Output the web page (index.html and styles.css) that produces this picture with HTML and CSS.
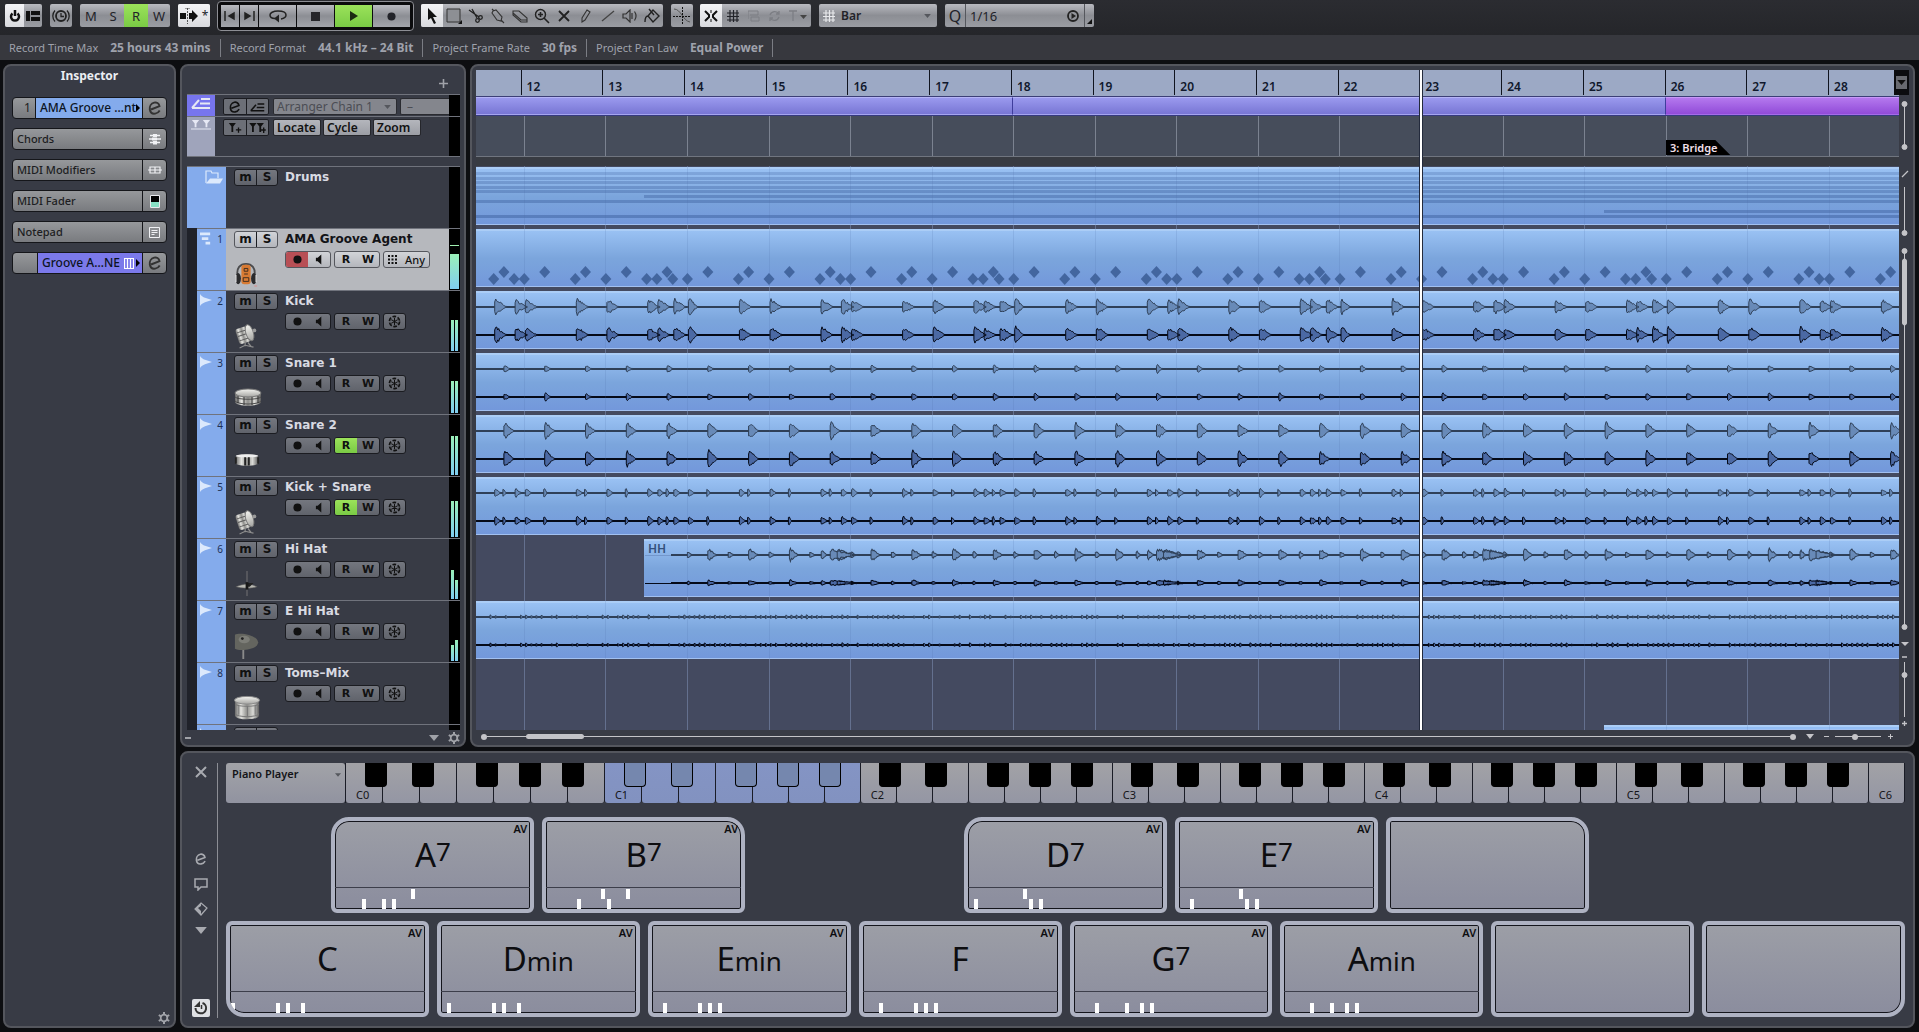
FILE: index.html
```html
<!DOCTYPE html>
<html lang="en">
<head>
<meta charset="utf-8">
<title>Project</title>
<link rel="stylesheet" href="styles.css">
</head>
<body>
<svg class="defs" aria-hidden="true">
  <defs>
    <linearGradient id="chrome" x1="0" x2="1" y1="0" y2="0">
      <stop offset="0" stop-color="#6a6a6a"/><stop offset=".25" stop-color="#e4e4e0"/><stop offset=".5" stop-color="#8f8f8c"/><stop offset=".75" stop-color="#dadad6"/><stop offset="1" stop-color="#5c5c5c"/>
    </linearGradient>
    <linearGradient id="skin" x1="0" x2="0" y1="0" y2="1">
      <stop offset="0" stop-color="#f4f4f0"/><stop offset="1" stop-color="#a5a5a2"/>
    </linearGradient>
  </defs>
  <symbol id="i-edit" viewBox="0 0 16 16"><path d="M4 9.500 12.500 6.200C12 3.200 9.500 2 7.200 2.600 4 3.400 2.300 6.500 2.800 9.500c.5 3 2.800 4.500 5.400 4.100 2-.3 3.500-1.500 4.500-3.200" fill="none" stroke="currentColor" stroke-width="1.900"/></symbol>
  <symbol id="i-chain" viewBox="0 0 20 12"><path d="M1 11 8 3M1 11h18M10 2h9M9 6.500h10" fill="none" stroke="currentColor" stroke-width="2"/></symbol>
  <symbol id="i-markers" viewBox="0 0 22 12"><path d="M1 1h8L6 5v4H4V5zM13 1h8l-3 4v4h-2V5zM0 10.500h22v1H0z" fill="currentColor"/></symbol>
  <symbol id="i-marker-add" viewBox="0 0 18 12"><path d="M2 1h8L7 5v6H5V5zM10 8h6v1.500h-6zM12.200 6h1.500v6h-1.500z" fill="currentColor"/></symbol>
  <symbol id="i-cycle-add" viewBox="0 0 18 12"><path d="M0 1h8L5 5v6H3V5zM8 1h8l-3 4v6h-2V5zM13 8h5v1.500h-5zM15 6h1.500v6H15z" fill="currentColor"/></symbol>
  <symbol id="i-speaker" viewBox="0 0 10 12"><path d="M1 4h2l4-3.500v11L3 8H1z" fill="currentColor"/></symbol>
  <symbol id="i-rec" viewBox="0 0 10 10"><circle cx="5" cy="5" r="4.500" fill="currentColor"/></symbol>
  <symbol id="i-freeze" viewBox="0 0 14 14"><circle cx="7" cy="7" r="5.500" fill="none" stroke="currentColor" stroke-width="1.800" stroke-dasharray="4 1.760"/><path d="M7 3v8M3.500 5l7 4M3.500 9l7-4" stroke="currentColor" stroke-width="1.100"/></symbol>
  <symbol id="i-audio" viewBox="0 0 12 12"><path d="M0 0c1 2 3 3 5 3.800L12 6 5 8.200C3 9 1 10 0 12z" fill="currentColor"/></symbol>
  <symbol id="i-midi" viewBox="0 0 13 14"><path d="M0 0h11v3H0zM2 5h7v3H2zM6 10h5v3H6z" fill="currentColor"/></symbol>
  <symbol id="i-folder" viewBox="0 0 18 14"><path d="M1 13V1h5l1 2h6v5" fill="none" stroke="currentColor" stroke-width="1.200"/><path d="M1 13.500 5 8.500h13l-3 5z" fill="currentColor"/></symbol>
  <symbol id="i-gear" viewBox="0 0 12 12"><circle cx="6" cy="6" r="3.300" fill="none" stroke="currentColor" stroke-width="1.800"/><path d="M6 0v2.500M6 9.500V12M.8 3 3 4.300M9 7.700 11.200 9M.8 9 3 7.700M9 4.300 11.200 3" stroke="currentColor" stroke-width="2"/></symbol>
  <symbol id="i-down" viewBox="0 0 10 6"><path d="M0 0h10L5 6z" fill="currentColor"/></symbol>
  <symbol id="i-grid" viewBox="0 0 14 14"><path d="M4 1v12M7.500 1v12M11 1v12M1 4h12M1 7.500h12M1 11h12" stroke="currentColor" stroke-width="1.200"/></symbol>
  <symbol id="i-headphones" viewBox="0 0 26 28"><path d="M4 17C2 7 7 3 13 3s11 4 9 14" fill="none" stroke="#4c4c4e" stroke-width="2"/><rect x="8" y="4" width="10" height="21" rx="3" fill="#d87a32"/><path d="M11 8h4v3h-4zM11 14h4M10 18h6v4h-6z" fill="none" stroke="#3a2a20"/><ellipse cx="4.500" cy="19" rx="3" ry="6" fill="#2b2b2d"/><ellipse cx="21.500" cy="19" rx="3" ry="6" fill="#2b2b2d"/><path d="M2 15v8M24 15v8" stroke="#d9d9db" stroke-width="1.500"/><path d="M22 27l3 0" stroke="#d88"/></symbol>
  <symbol id="i-kick" viewBox="0 0 28 28"><g transform="rotate(-18 12 12)"><rect x="3" y="4" width="13" height="17" rx="3" fill="url(#chrome)"/><path d="M4 8h11M4 12h11M4 17h11" stroke="#5c5c5c"/><ellipse cx="17" cy="12" rx="4" ry="9" fill="url(#skin)" stroke="#777"/></g><circle cx="22" cy="8" r="2" fill="#9a9a9a"/><path d="M12 20v5M6 27l6-3 9 2M15 21l4 5" stroke="#8d8d8d" fill="none" stroke-width="1.300"/></symbol>
  <symbol id="i-snare" viewBox="0 0 28 20"><path d="M1 5v9c1 5 25 5 26 0V5z" fill="url(#chrome)"/><path d="M1 9c3 3 23 3 26 0M1 13c3 4 23 4 26 0" stroke="#4d4d4d" fill="none"/><ellipse cx="14" cy="5" rx="13" ry="4" fill="url(#skin)" stroke="#777"/><path d="M4 8v7M10 9v8M18 9v8M24 8v7" stroke="#333"/></symbol>
  <symbol id="i-snare2" viewBox="0 0 28 14"><path d="M2 3c4-3 20-3 24 0v8c-4 3-20 3-24 0z" fill="url(#chrome)"/><ellipse cx="14" cy="2.500" rx="12" ry="1.800" fill="#eee"/><path d="M2 4v7M12 4v9M16 4v9M26 4v7" stroke="#222" stroke-width="2"/></symbol>
  <symbol id="i-hat" viewBox="0 0 28 28"><path d="M14 0v27" stroke="#777"/><path d="M2 17c5-2 9-3 12-3s7 1 11 3c-6 2-17 2-23 0z" fill="#b8b8b2" stroke="#555" stroke-width=".6"/><path d="M14 13h7l-4 4h-3z" fill="#222"/><path d="M14 12v8" stroke="#181818" stroke-width="3"/></symbol>
  <symbol id="i-ride" viewBox="0 0 28 28"><path d="M10 12v16" stroke="#8a8a8a" stroke-width="2"/><path d="M1 2c5-3 24 0 25 8 0 8-20 10-25 7z" fill="#64655f"/><ellipse cx="11" cy="7" rx="6" ry="4" fill="#7c7d77"/><circle cx="9" cy="6" r="1.500" fill="#222"/></symbol>
  <symbol id="i-tom" viewBox="0 0 28 25"><path d="M1 5v16c1 5 24 5 25 0V5z" fill="url(#chrome)"/><path d="M1 9c3 3 22 3 25 0M1 19c3 4 22 4 25 0M5 10v10M14 11v11M22 10v10" stroke="#777" fill="none"/><ellipse cx="13.500" cy="5" rx="13" ry="4" fill="url(#skin)" stroke="#888"/></symbol>
</svg>

<div class="app">
  <header class="toolbar">
    <div class="group">
      <button class="on w19" aria-label="Constrain delay"><svg width="12" height="12" viewBox="0 0 12 12"><path d="M3.500 3.500a4 4 0 1 0 5 0" fill="none" stroke="#111" stroke-width="2.500"/><path d="M6 0v6" stroke="#111" stroke-width="2.500"/></svg></button>
      <button class="w18" aria-label="Zones"><svg width="14" height="12" viewBox="0 0 14 12"><path d="M0 1h4v10H0zM5 1h9v4H5zM5 7h9v4H5z" fill="#111"/></svg></button>
    </div>
    <div class="group"><button class="w22" aria-label="Time"><svg width="18" height="16" viewBox="0 0 18 16"><circle cx="9" cy="8" r="5" fill="none" stroke="#222" stroke-width="1.800"/><path d="M9 5v3.500h3M3 2.500a8 8 0 0 0 0 11M15 2.500a8 8 0 0 1 0 11" fill="none" stroke="#222" stroke-width="1.300"/></svg></button></div>
    <div class="group states"><button>M</button><button>S</button><button class="green">R</button><button>W</button></div>
    <div class="group">
      <button class="on w22" aria-label="Auto-scroll"><svg width="18" height="16" viewBox="0 0 18 16"><path d="M0 5h6v6H0zM9 5h3V2l6 6-6 6v-3H9z" fill="#111"/><path d="M7.500 0v16M5 0h5" stroke="#555" stroke-dasharray="2 1"/></svg></button><button class="on w10">*</button>
    </div>
    <div class="transport">
      <button class="w18" aria-label="Previous marker"><svg width="12" height="10" viewBox="0 0 12 10"><path d="M1 0v10M10 2v6L5 5z" fill="#222" stroke="#222" stroke-width="1.500"/></svg></button>
      <button class="w18" aria-label="Next marker"><svg width="12" height="10" viewBox="0 0 12 10"><path d="M11 0v10M2 2v6l5-3z" fill="#222" stroke="#222" stroke-width="1.500"/></svg></button>
      <button class="w37" aria-label="Cycle"><svg width="18" height="14" viewBox="0 0 18 14"><path d="M6 9.500C3 9.500 1 8 1 6s3-4 8-4 8 1.500 8 4-2 3.500-5 4" fill="none" stroke="#222" stroke-width="1.500"/><path d="M10 5.500v8L5 9.500z" fill="#222"/></svg></button>
      <button class="w37" aria-label="Stop"><svg width="9" height="9"><path d="M0 0h9v9H0z" fill="#26262a"/></svg></button>
      <button class="w37 green" aria-label="Play"><svg width="8" height="10"><path d="M0 0v10l8-5z" fill="#1c2a12"/></svg></button>
      <button class="w37" aria-label="Record"><svg width="9" height="9"><use href="#i-rec"/></svg></button>
    </div>
    <div class="group tools">
      <button class="on" aria-label="Object selection"><svg width="12" height="16" viewBox="0 0 12 16"><path d="M2 0v12l3-2 3 6 2-1-3-6h4z" fill="#111"/></svg></button>
      <button aria-label="Range"><svg width="16" height="16" viewBox="0 0 16 16"><path d="M1 1h13v13H1z" fill="#8d8f94" stroke="#333"/><path d="M16 12v4h-4z" fill="#111"/></svg></button>
      <button aria-label="Split"><svg width="16" height="16" viewBox="0 0 16 16"><path d="M1 2l10 7M4 1l5 9" stroke="#222" stroke-width="1.300"/><circle cx="12.500" cy="9.500" r="1.800" fill="none" stroke="#222" stroke-width="1.300"/><circle cx="9.500" cy="12.500" r="1.800" fill="none" stroke="#222" stroke-width="1.300"/></svg></button>
      <button aria-label="Glue"><svg width="16" height="16" viewBox="0 0 16 16"><path d="M3 3l3-1 6 7-1 4-4-1-5-7zM11 12l3 3M2 1l2 2" fill="none" stroke="#333" stroke-width="1.100"/></svg></button>
      <button aria-label="Erase"><svg width="16" height="16" viewBox="0 0 16 16"><path d="M1 3h6l8 7v4h-6L1 7zM1 5l8 7h6" fill="none" stroke="#333" stroke-width="1.100"/></svg></button>
      <button aria-label="Zoom tool"><svg width="16" height="16" viewBox="0 0 16 16"><circle cx="6.500" cy="6.500" r="5" fill="none" stroke="#222" stroke-width="1.400"/><path d="M4 6.500h5M6.500 4v5M10 10l5 5" stroke="#222" stroke-width="1.600"/></svg></button>
      <button aria-label="Mute"><svg width="12" height="12"><path d="M1 1l10 10M11 1 1 11" stroke="#222" stroke-width="1.800"/></svg></button>
      <button aria-label="Draw"><svg width="14" height="16" viewBox="0 0 14 16"><path d="M3 10 8 2l3 2-5 8-3 2z" fill="none" stroke="#333" stroke-width="1.100"/></svg></button>
      <button aria-label="Line"><svg width="14" height="14"><path d="M1 12 13 2" stroke="#444" stroke-width="1.300"/></svg></button>
      <button aria-label="Play tool"><svg width="16" height="14" viewBox="0 0 16 14"><path d="M1 5h3l4-4v12L4 9H1zM10 4v6M12.500 2.500a8 8 0 0 1 0 9" fill="none" stroke="#333" stroke-width="1.200"/></svg></button>
      <button aria-label="Color"><svg width="16" height="16" viewBox="0 0 16 16"><path d="M4 8 9 2l6 6-6 6zM5 1l5 6M4 8c-3 0-3 3-3 6" fill="none" stroke="#222" stroke-width="1.400"/></svg></button>
    </div>
    <div class="group"><button class="w22" aria-label="Automation follows"><svg width="18" height="20" viewBox="0 0 18 20"><path d="M1 3c7 0 9 12 16 13" fill="none" stroke="#555"/><path d="M0 10.500h18M9.500 1v18" stroke="#111" stroke-dasharray="2 1"/></svg></button></div>
    <div class="group snap">
      <button class="on w22" aria-label="Snap"><svg width="14" height="12" viewBox="0 0 14 12"><path d="M1 1l4 4v2l-4 4M13 1 9 5v2l4 4" fill="none" stroke="#111" stroke-width="2"/><path d="M7 0v3M7 9v3" stroke="#111"/></svg></button>
      <button class="w22" aria-label="Grid"><svg width="14" height="14"><use href="#i-grid"/></svg></button>
      <button class="w20 faint" aria-label="Align"><svg width="12" height="12" viewBox="0 0 12 12"><path d="M0 1h10v4H2M3 7h8v4H3zM0 1v8" fill="none" stroke="currentColor"/></svg></button>
      <button class="w20 faint" aria-label="Relative"><svg width="13" height="12" viewBox="0 0 13 12"><path d="M2 5a5 5 0 0 1 9-1M11 7a5 5 0 0 1-9 1M11 1v3H8M2 11V8h3" fill="none" stroke="currentColor" stroke-width="1.300"/></svg></button>
      <button class="w27 faint" aria-label="Snap type"><svg width="18" height="12" viewBox="0 0 18 12"><path d="M0 1h8M4 1v10" stroke="currentColor" stroke-width="1.300"/><path d="M11 5h7l-3.500 4z" fill="#444"/></svg></button>
    </div>
    <div class="group field gridtype"><svg class="lead" width="14" height="14"><use href="#i-grid"/></svg><select aria-label="Grid type"><option>Bar</option></select><svg class="arrow" width="7" height="4"><use href="#i-down"/></svg></div>
    <div class="group field quant"><button class="q w21">Q</button><select aria-label="Quantize preset"><option>1/16</option></select><button class="w22 plain" aria-label="Apply quantize"><svg width="12" height="12" viewBox="0 0 12 12"><circle cx="6" cy="6" r="5" fill="none" stroke="#222" stroke-width="1.800"/><path d="M4.500 3v6L9 6z" fill="#222"/></svg></button><button class="w10 cell" aria-label="Quantize panel"><svg width="5" height="5"><path d="M5 0v5H0z" fill="#111"/></svg></button></div>
  </header>

  <dl class="infoline">
    <div><dt>Record Time Max</dt><dd>25 hours 43 mins</dd></div>
    <div><dt>Record Format</dt><dd>44.1 kHz – 24 Bit</dd></div>
    <div><dt>Project Frame Rate</dt><dd>30 fps</dd></div>
    <div><dt>Project Pan Law</dt><dd>Equal Power</dd></div>
  </dl>

  <main class="workspace">
    <aside class="panel inspector">
      <h2>Inspector</h2>
      <div class="slot"><span class="num">1</span><button class="name blue">AMA Groove …nt<svg width="4" height="8"><path d="M0 0v8l4-4z"/></svg></button><button class="end" aria-label="Edit channel"><svg width="16" height="16"><use href="#i-edit"/></svg></button></div>
      <div class="slot"><button class="title">Chords</button><button class="end light" aria-label="Chords state"><svg width="12" height="12" viewBox="0 0 12 12"><path d="M1 2.500h10M0 6h12M1 9.500h10" stroke="currentColor" stroke-width="1.500"/><path d="M4 1h4v3H4zM3 4.500h5v3H3zM4 8h4v3.500H4z" fill="currentColor"/></svg></button></div>
      <div class="slot"><button class="title">MIDI Modifiers</button><button class="end light" aria-label="Modifiers state"><svg width="14" height="8" viewBox="0 0 14 8"><path d="M2 1h10v6H2zM0 4h14M7 1v6" fill="none" stroke="currentColor" stroke-width="1.200"/></svg></button></div>
      <div class="slot"><button class="title">MIDI Fader</button><button class="end" aria-label="Fader state"><svg width="10" height="13"><path d="M.5.5h9v12h-9z" fill="#000" stroke="#e8eaee"/><path d="M1 7h8v5H1z" fill="#86e0c4"/></svg></button></div>
      <div class="slot"><button class="title">Notepad</button><button class="end light" aria-label="Notepad state"><svg width="11" height="11" viewBox="0 0 11 11"><path d="M.5.5h10v10H.5zM2.500 3.500h6M2.500 5.500h6M2.500 7.500h3" fill="none" stroke="currentColor"/></svg></button></div>
      <div class="slot"><span class="num"></span><button class="name violet">Groove A…NE<svg class="keys" width="10" height="11" viewBox="0 0 10 11"><path d="M.5.5h9v10h-9zM3.500 0v10M6.500 0v10" fill="none" stroke="#fff" stroke-width="1.200"/></svg><svg width="4" height="8"><path d="M0 0v8l4-4z"/></svg></button><button class="end" aria-label="Edit instrument"><svg width="16" height="16"><use href="#i-edit"/></svg></button></div>
      <button class="gear" aria-label="Inspector setup"><svg width="12" height="12"><use href="#i-gear"/></svg></button>
    </aside>

    <div class="zones">
      <div class="upper">
        <section class="panel tracklist" aria-label="Tracks">
          <div class="listhead"><button aria-label="Add track"><svg width="9" height="9"><path d="M4.500 0v9M0 4.500h9" stroke="currentColor" stroke-width="1.600"/></svg></button></div>
          <div class="row arranger">
            <div class="tag"><svg width="20" height="12"><use href="#i-chain"/></svg></div>
            <div class="body">
              <span class="pair"><button aria-label="Edit arranger"><svg width="14" height="14"><use href="#i-edit"/></svg></button><button aria-label="Arranger mode"><svg width="15" height="10"><use href="#i-chain"/></svg></button></span>
              <span class="chain"><select aria-label="Arranger chain" disabled><option>Arranger Chain 1</option></select><svg class="arrow" width="7" height="4"><use href="#i-down"/></svg></span>
              <input class="repeat" aria-label="Repeats" value="–" disabled>
            </div>
            <div class="meter"></div>
          </div>
          <div class="row markers">
            <div class="tag"><svg width="20" height="11"><use href="#i-markers"/></svg></div>
            <div class="body">
              <span class="pair"><button aria-label="Add marker"><svg width="16" height="11"><use href="#i-marker-add"/></svg></button><button aria-label="Add cycle marker"><svg width="17" height="11"><use href="#i-cycle-add"/></svg></button></span>
              <button class="pale">Locate</button><button class="pale">Cycle</button><button class="pale">Zoom</button>
            </div>
            <div class="meter"></div>
          </div>
          <div class="tracks">
            <div class="row track folder">
              <div class="tag"><svg width="18" height="14"><use href="#i-folder"/></svg></div>
              <div class="body"><div class="ms"><button>m</button><button>S</button></div><h3>Drums</h3></div>
              <div class="meter"></div>
            </div>
            <div class="row track selected">
              <div class="tag"><svg width="12" height="14"><use href="#i-midi"/></svg><span>1</span></div>
              <div class="body"><div class="ms"><button>m</button><button>S</button></div><h3>AMA Groove Agent</h3>
                <svg class="pic" width="24" height="26"><use href="#i-headphones"/></svg>
                <div class="ctl"><span class="box"><button class="armed" aria-label="Record"><svg width="9" height="9"><use href="#i-rec"/></svg></button><button aria-label="Monitor"><svg width="9" height="11"><use href="#i-speaker"/></svg></button></span><span class="box"><button>R</button><button>W</button></span><button class="box any"><svg width="9" height="9" viewBox="0 0 9 9"><path d="M0 1h9M0 4.500h9M0 8h9" stroke="#111" stroke-width="1.800" stroke-dasharray="2 1.500"/></svg>Any</button></div></div>
              <div class="meter wide"><i class="peak"></i><i style="height:35px"></i></div>
            </div>
            <div class="row track">
              <div class="tag"><svg width="12" height="12"><use href="#i-audio"/></svg><span>2</span></div>
              <div class="body"><div class="ms"><button>m</button><button>S</button></div><h3>Kick</h3>
                <svg class="pic" width="26" height="28"><use href="#i-kick"/></svg>
                <div class="ctl"><span class="box"><button aria-label="Record"><svg width="9" height="9"><use href="#i-rec"/></svg></button><button aria-label="Monitor"><svg width="9" height="11"><use href="#i-speaker"/></svg></button></span><span class="box"><button>R</button><button>W</button></span><button class="box ice" aria-label="Freeze"><svg width="13" height="13"><use href="#i-freeze"/></svg></button></div></div>
              <div class="meter"><i style="height:31px"></i><i style="height:31px"></i></div>
            </div>
            <div class="row track">
              <div class="tag"><svg width="12" height="12"><use href="#i-audio"/></svg><span>3</span></div>
              <div class="body"><div class="ms"><button>m</button><button>S</button></div><h3>Snare 1</h3>
                <svg class="pic" width="28" height="20"><use href="#i-snare"/></svg>
                <div class="ctl"><span class="box"><button aria-label="Record"><svg width="9" height="9"><use href="#i-rec"/></svg></button><button aria-label="Monitor"><svg width="9" height="11"><use href="#i-speaker"/></svg></button></span><span class="box"><button>R</button><button>W</button></span><button class="box ice" aria-label="Freeze"><svg width="13" height="13"><use href="#i-freeze"/></svg></button></div></div>
              <div class="meter"><i style="height:32px"></i><i style="height:32px"></i></div>
            </div>
            <div class="row track">
              <div class="tag"><svg width="12" height="12"><use href="#i-audio"/></svg><span>4</span></div>
              <div class="body"><div class="ms"><button>m</button><button>S</button></div><h3>Snare 2</h3>
                <svg class="pic" width="26" height="14"><use href="#i-snare2"/></svg>
                <div class="ctl"><span class="box"><button aria-label="Record"><svg width="9" height="9"><use href="#i-rec"/></svg></button><button aria-label="Monitor"><svg width="9" height="11"><use href="#i-speaker"/></svg></button></span><span class="box"><button class="green">R</button><button>W</button></span><button class="box ice" aria-label="Freeze"><svg width="13" height="13"><use href="#i-freeze"/></svg></button></div></div>
              <div class="meter"><i style="height:39px"></i><i style="height:39px"></i></div>
            </div>
            <div class="row track">
              <div class="tag"><svg width="12" height="12"><use href="#i-audio"/></svg><span>5</span></div>
              <div class="body"><div class="ms"><button>m</button><button>S</button></div><h3>Kick + Snare</h3>
                <svg class="pic" width="26" height="28"><use href="#i-kick"/></svg>
                <div class="ctl"><span class="box"><button aria-label="Record"><svg width="9" height="9"><use href="#i-rec"/></svg></button><button aria-label="Monitor"><svg width="9" height="11"><use href="#i-speaker"/></svg></button></span><span class="box"><button class="green">R</button><button>W</button></span><button class="box ice" aria-label="Freeze"><svg width="13" height="13"><use href="#i-freeze"/></svg></button></div></div>
              <div class="meter"><i style="height:36px"></i><i style="height:36px"></i></div>
            </div>
            <div class="row track">
              <div class="tag"><svg width="12" height="12"><use href="#i-audio"/></svg><span>6</span></div>
              <div class="body"><div class="ms"><button>m</button><button>S</button></div><h3>Hi Hat</h3>
                <svg class="pic" width="26" height="28"><use href="#i-hat"/></svg>
                <div class="ctl"><span class="box"><button aria-label="Record"><svg width="9" height="9"><use href="#i-rec"/></svg></button><button aria-label="Monitor"><svg width="9" height="11"><use href="#i-speaker"/></svg></button></span><span class="box"><button>R</button><button>W</button></span><button class="box ice" aria-label="Freeze"><svg width="13" height="13"><use href="#i-freeze"/></svg></button></div></div>
              <div class="meter"><i style="height:29px"></i><i style="height:19px"></i></div>
            </div>
            <div class="row track">
              <div class="tag"><svg width="12" height="12"><use href="#i-audio"/></svg><span>7</span></div>
              <div class="body"><div class="ms"><button>m</button><button>S</button></div><h3>E Hi Hat</h3>
                <svg class="pic" width="26" height="28"><use href="#i-ride"/></svg>
                <div class="ctl"><span class="box"><button aria-label="Record"><svg width="9" height="9"><use href="#i-rec"/></svg></button><button aria-label="Monitor"><svg width="9" height="11"><use href="#i-speaker"/></svg></button></span><span class="box"><button>R</button><button>W</button></span><button class="box ice" aria-label="Freeze"><svg width="13" height="13"><use href="#i-freeze"/></svg></button></div></div>
              <div class="meter"><i style="height:16px"></i><i style="height:21px"></i></div>
            </div>
            <div class="row track">
              <div class="tag"><svg width="12" height="12"><use href="#i-audio"/></svg><span>8</span></div>
              <div class="body"><div class="ms"><button>m</button><button>S</button></div><h3>Toms–Mix</h3>
                <svg class="pic" width="27" height="25"><use href="#i-tom"/></svg>
                <div class="ctl"><span class="box"><button aria-label="Record"><svg width="9" height="9"><use href="#i-rec"/></svg></button><button aria-label="Monitor"><svg width="9" height="11"><use href="#i-speaker"/></svg></button></span><span class="box"><button>R</button><button>W</button></span><button class="box ice" aria-label="Freeze"><svg width="13" height="13"><use href="#i-freeze"/></svg></button></div></div>
              <div class="meter"></div>
            </div>
            <div class="row track cut">
              <div class="tag"><svg width="12" height="12"><use href="#i-audio"/></svg></div>
              <div class="body"><div class="ms"><button aria-label="Mute"></button><button aria-label="Solo"></button></div></div>
              <div class="meter"></div>
            </div>
          </div>
          <div class="listfoot"><span class="dash"></span><svg width="10" height="6"><use href="#i-down"/></svg><button aria-label="Track controls"><svg width="12" height="12"><use href="#i-gear"/></svg></button></div>
        </section>

        <section class="panel arrange" aria-label="Project window">
          <div class="canvas">
            <div class="ruler">
              <span class="pre"></span><span class="bar">12</span><span class="bar">13</span><span class="bar">14</span><span class="bar">15</span><span class="bar">16</span><span class="bar">17</span><span class="bar">18</span><span class="bar">19</span><span class="bar">20</span><span class="bar">21</span><span class="bar">22</span><span class="bar">23</span><span class="bar">24</span><span class="bar">25</span><span class="bar">26</span><span class="bar">27</span><span class="bar last">28</span>
            </div>
            <div class="parts"><span class="part p1"></span><span class="part p2"></span><span class="part p3"></span></div>
            <div class="markerlane"><svg class="lines" data-grid="#7b8290"></svg><span class="before"></span><span class="flag">3: Bridge</span></div>
            <div class="split"></div>
            <div class="lanes">
              <svg class="lines" data-grid="#69718a"></svg>
              <div class="lane"><div class="event"><svg data-wave="folder"></svg></div></div>
              <div class="lane"><div class="event"><svg data-wave="notes"></svg></div></div>
              <div class="lane"><div class="event"><svg data-wave="kick"></svg></div></div>
              <div class="lane"><div class="event"><svg data-wave="snare1"></svg></div></div>
              <div class="lane"><div class="event"><svg data-wave="snare2"></svg></div></div>
              <div class="lane"><div class="event"><svg data-wave="mix"></svg></div></div>
              <div class="lane"><div class="event" style="margin-left:11.8%"><span class="clip">HH</span><svg data-wave="hat" data-from="168"></svg></div></div>
              <div class="lane"><div class="event"><svg data-wave="ehat"></svg></div></div>
              <div class="lane"></div>
              <div class="lane cut"><div class="event" style="margin-left:79.3%"></div></div>
              <svg class="lines soft" data-grid="#4d6da6"></svg>
            </div>
            <div class="playhead" style="left:66.3%"></div>
          </div>
          <div class="side">
            <button class="corner" aria-label="Ruler format"><svg width="8" height="5"><use href="#i-down"/></svg></button>
            <svg width="14" height="635" viewBox="0 0 14 635" fill="#c4c4c8" stroke="#c4c4c8">
              <path d="M5.500 9v43M5.500 92v46M5.500 156v376M5.500 567v55" fill="none"/>
              <path d="M3 82l6-6M3 562h5M3 628.500h5M5.500 626v5" fill="none" stroke-width="1.300"/>
              <circle cx="5.500" cy="9" r="2.500"/><circle cx="5.500" cy="52" r="2.500"/><circle cx="5.500" cy="138" r="2.500"/><circle cx="5.500" cy="156" r="2.500"/><circle cx="5.500" cy="532" r="2.500"/><circle cx="5.500" cy="580" r="2.500"/>
              <rect x="3.500" y="164" width="4" height="66" rx="2"/><path d="M2 547h8l-4 4z" stroke="none"/>
            </svg>
          </div>
          <div class="hscroll">
            <i class="dot"></i><span class="track-line"><i class="thumb" style="margin-left:3%"></i></span><i class="dot"></i>
            <svg width="8" height="5"><use href="#i-down"/></svg><span class="sign minus"></span><input type="range" aria-label="Horizontal zoom" value="42"><span class="sign plus"></span>
          </div>
        </section>
      </div>

      <section class="panel chords" aria-label="Chord pads">
        <nav class="rail">
          <button aria-label="Close"><svg width="12" height="12"><path d="M1 1l10 10M11 1 1 11" stroke="currentColor" stroke-width="2"/></svg></button>
          <button class="push" aria-label="Player setup"><svg width="16" height="14"><use href="#i-edit"/></svg></button>
          <button aria-label="Chord assistant"><svg width="14" height="14" viewBox="0 0 14 14"><path d="M1 2h12v8H7l-3 3v-3H1z" fill="none" stroke="currentColor" stroke-width="1.500"/></svg></button>
          <button aria-label="Pad layout"><svg width="14" height="14" viewBox="0 0 14 14"><path d="M7 1l6 5-6 7-6-6z" fill="none" stroke="currentColor" stroke-width="1.200"/><path d="M7 1 1 7l6 6z" fill="currentColor"/><path d="M4 6l3-2v5z" fill="#383b45"/></svg></button>
          <button aria-label="Functions"><svg width="12" height="7"><use href="#i-down" width="12" height="7"/></svg></button>
          <button class="lit" aria-label="Use velocity"><svg width="14" height="14" viewBox="0 0 14 14"><path d="M8.500 2a5.300 5.300 0 1 1-7 5" fill="none" stroke="#333" stroke-width="2"/><path d="M0 6 6 0v6z" fill="#333"/><path d="M7.500 4v4" stroke="#333" stroke-width="1.500"/></svg></button>
        </nav>
        <div class="deck">
          <div class="piano">
            <div class="player"><select aria-label="Player"><option>Piano Player</option></select><svg class="arrow" width="6" height="4"><use href="#i-down"/></svg></div>
            <div class="keyboard" id="keyboard"></div>
          </div>
          <div class="pads">
            <button class="pad r1 c2 tl"><b>AV</b><span class="chord">A<sup>7</sup></span><svg class="voicing" data-low="26,46,56" data-high="75"></svg></button>
            <button class="pad r1 c4 tr"><b>AV</b><span class="chord">B<sup>7</sup></span><svg class="voicing" data-low="30,60" data-high="54,79"></svg></button>
            <button class="pad r1 c8 tl"><b>AV</b><span class="chord">D<sup>7</sup></span><svg class="voicing" data-low="5,60,70" data-high="54"></svg></button>
            <button class="pad r1 c10"><b>AV</b><span class="chord">E<sup>7</sup></span><svg class="voicing" data-low="10,65,75" data-high="59"></svg></button>
            <button class="pad r1 c12 tr" aria-label="Empty pad"></button>
            <button class="pad r2 bl"><b>AV</b><span class="chord">C</span><svg class="voicing" data-low="0,45,55,70"></svg></button>
            <button class="pad r2"><b>AV</b><span class="chord">D<small>min</small></span><svg class="voicing" data-low="5,50,60,75"></svg></button>
            <button class="pad r2"><b>AV</b><span class="chord">E<small>min</small></span><svg class="voicing" data-low="10,45,55,65"></svg></button>
            <button class="pad r2"><b>AV</b><span class="chord">F</span><svg class="voicing" data-low="15,50,60,70"></svg></button>
            <button class="pad r2"><b>AV</b><span class="chord">G<sup>7</sup></span><svg class="voicing" data-low="20,50,65,75"></svg></button>
            <button class="pad r2"><b>AV</b><span class="chord">A<small>min</small></span><svg class="voicing" data-low="25,45,60,70"></svg></button>
            <button class="pad r2" aria-label="Empty pad"></button>
            <button class="pad r2 br" aria-label="Empty pad"></button>
          </div>
        </div>
      </section>
    </div>
  </main>
</div>
<script src="project.js"></script>
</body>
</html>
```
FILE: styles.css
```css
* { box-sizing: border-box; }
body { margin: 0; background: #0d0e11; color: #d4d6de; font: 12px/16px "Noto Sans", "Open Sans", sans-serif; }
button, select, input { font: inherit; color: inherit; margin: 0; padding: 0; border: 0; background: none; border-radius: 0; appearance: none; outline: 0; }
button { display: flex; align-items: center; justify-content: center; flex: none; }
select:disabled, input:disabled { opacity: 1; }
h2, h3, dl, dd { margin: 0; font-size: inherit; }
svg { display: block; flex: none; }
.defs { position: absolute; width: 0; height: 0; }
.app { display: flex; flex-direction: column; min-height: 100vh; }

/* toolbar */
.toolbar { display: flex; align-items: flex-start; height: 35px; padding: 4px 5px 0; gap: 8px; background: linear-gradient(#2b2c31, #25262a); color: #222329; }
.group { display: flex; height: 23px; border-radius: 2px; overflow: hidden; background: linear-gradient(#b9bac0, #8c8e94 50%, #9b9da3); position: relative; }
.group button { height: 23px; }
.toolbar .on { background: linear-gradient(#f4f4f6, #d9dade); }
.green, .toolbar .green { background: linear-gradient(#9be25a, #7acb45); }
.w10 { width: 10px; } .w18 { width: 18px; } .w19 { width: 19px; } .w20 { width: 20px; } .w21 { width: 21px; }
.w22 { width: 22px; } .w27 { width: 27px; } .w37 { width: 37px; }
.states { font-size: 13px; }
.states button { width: 22px; }
.states button:nth-child(3) { width: 24px; }
.toolbar .transport { display: flex; gap: 1px; height: 30px; margin: -3px -1px 0; padding: 3px; background: #0b0b0d; border: 1px solid #8d8e94; border-radius: 4px; }
.transport button { height: 22px; background: linear-gradient(#b9bac0, #8c8e94 50%, #a3a5ab); }
.tools button { width: 22px; }
.snap { margin-left: -1px; }
.faint { color: #7c7e84; }
.field { align-items: center; }
.field select { flex: 1; height: 23px; font-size: 12px; }
.lead { margin: 0 5px 0 3px; color: #e8e9ec; }
.arrow { position: absolute; right: 6px; top: 10px; color: #55575d; pointer-events: none; }
.gridtype { width: 118px; font-weight: 600; }
.quant { width: 149px; }
.quant .q { border-right: 1px solid #55575d; font-size: 16px; }
.quant select { padding-left: 4px; font-size: 13px; }
.quant .cell { border-left: 1px solid #55575d; align-items: flex-end; padding-bottom: 3px; }

/* info line */
.infoline { display: flex; align-items: center; height: 25px; background: #37383e; color: #9fa2ac; font-size: 11px; }
.infoline div { display: flex; gap: 12px; padding: 0 9px; border-right: 1px solid #7b7d84; line-height: 18px; }
.infoline dt { font-weight: 400; }
.infoline dd { font-weight: 700; font-size: 12px; }

/* panels */
.workspace { display: flex; flex: 1; gap: 4px; padding: 4px 4px 4px 3px; }
.panel { background: #383b45; border: 2px solid #54565d; border-radius: 8px; }
.zones { display: flex; flex-direction: column; flex: 1; min-width: 0; gap: 4px; }
.upper { display: flex; gap: 4px; }

/* inspector */
.inspector { display: flex; flex-direction: column; width: 173px; padding: 2px 7px; }
.inspector h2 { text-align: center; color: #eceef2; margin-bottom: 13px; }
.slot { display: flex; height: 22px; margin-bottom: 9px; color: #1d1e22; background: linear-gradient(#96989b, #797b7f); border: 1px solid #15161a; border-radius: 4px; overflow: hidden; }
.num { width: 24px; padding-right: 4px; text-align: right; line-height: 20px; }
.slot .name { flex: 1; justify-content: space-between; padding: 0 2px 0 4px; border-left: 1px solid #15161a; white-space: nowrap; font-weight: 500; color: #0c1422; }
.slot .title { flex: 1; justify-content: flex-start; padding-left: 4px; font-size: 11px; font-weight: 500; }
.blue { background: #84abec; }
.violet { background: #7b79ea; }
.keys { margin-left: 2px; }
.end { width: 24px; border-left: 1px solid #15161a; color: #333; }
.light { color: #f0f1f4; }
.gear { margin: auto -3px 0 auto; color: #a0a2a8; }

/* track list */
.tracklist { width: 286px; padding: 0 4px 0 5px; }
.listhead { display: flex; align-items: center; justify-content: flex-end; height: 28px; padding: 6px 12px 0 0; color: #9fa1a8; }
.row { display: flex; border-top: 1px solid #70737c; }
.tag { display: flex; justify-content: center; width: 28px; padding-top: 2px; color: #e6e8f4; }
.row .body { flex: 1; display: flex; align-items: flex-start; min-width: 0; color: #111; }
.meter { display: flex; align-items: flex-end; gap: 1px; width: 11px; padding: 0 2px 1px; background: #000; }
.meter i { width: 3px; background: linear-gradient(#9af0b8, #7fcdf0); }
.meter.wide { position: relative; padding: 0 1px 1px; }
.meter.wide i { width: 9px; }
.meter .peak { position: absolute; bottom: 44px; height: 1px; background: #a0f0b0; }
.arranger { height: 22px; }
.arranger .tag { background: #7775ee; }
.arranger .body, .markers .body { padding: 3px 0 0 8px; }
.pair { display: flex; margin-right: 4px; border: 1px solid #1b1c21; border-radius: 2px; background: #6c6f77; }
.pair button { width: 22px; height: 15px; }
.pair button + button { border-left: 1px solid #1b1c21; }
.chain { position: relative; margin-right: 3px; }
.chain select { width: 124px; height: 17px; padding-left: 3px; font-size: 12px; border: 1px solid #2a2b30; border-radius: 2px; background: #84868d; color: #4b4d54; }
.chain .arrow { top: 7px; }
.repeat { flex: 1; min-width: 0; height: 17px; padding-left: 6px; background: #84868d; color: #4b4d54; border: 1px solid #2a2b30; border-right: 0; border-radius: 2px 0 0 2px; }
.markers { height: 41px; border-bottom: 1px solid #70737c; }
.markers .body { padding-top: 2px; }
.markers .tag { background: #9fa4bb; }
.pale { width: 48px; height: 17px; margin-right: 2px; padding-left: 3px; justify-content: flex-start; font-weight: 600; background: linear-gradient(#b4b6bc, #9b9da4); border: 1px solid #25262b; border-radius: 2px; }
.tracks { margin-top: 9px; background: #20222a; }
.track { height: 62px; margin-left: 10px; }
.track .tag { width: 29px; padding: 3px 3px 0; justify-content: space-between; background: #84abec; color: #dce9fc; }
.tag span { font-size: 10px; line-height: 14px; color: #1d3156; }
.track .body { display: grid; grid-template-columns: 44px 1fr; grid-template-rows: 17px 1fr; column-gap: 7px; row-gap: 3px; padding: 2px 0 0 8px; background: #383b45; }
.track h3 { font: 700 12px/17px "DejaVu Sans", sans-serif; color: #d8dae2; white-space: nowrap; }
.folder { margin-left: 0; }
.folder .tag { width: 39px; justify-content: flex-end; }
.track.selected .body { background: #b6b8bd; }
.track.selected h3 { color: #121317; font-weight: 700; }
.ms, .box { display: flex; border: 1px solid #1b1c21; border-radius: 3px; background: linear-gradient(#74777f, #60636b); font: 700 12px/15px "DejaVu Sans", sans-serif; overflow: hidden; }
.ms { height: 17px; }
.ms button { width: 21px; height: 15px; }
.ms button + button { border-left: 1px solid #1b1c21; }
.selected .ms, .selected .box { background: linear-gradient(#d2d4d8, #b4b6bc); border-color: #55575d; }
.pic { align-self: center; justify-self: start; margin-top: 6px; }
.ctl { display: flex; gap: 3px; }
.box { height: 17px; }
.box > button { width: 22px; height: 15px; font-size: 11px; }
.ice { width: 23px; }
.any { width: 47px; gap: 8px; font: 500 11px/15px "Noto Sans", sans-serif; }
.box .armed { background: #b84f55; }
.track.cut { height: 6px; overflow: hidden; }
.listfoot { display: flex; align-items: center; justify-content: flex-end; gap: 9px; height: 15px; color: #a0a2a8; }
.dash { width: 6px; height: 2px; margin-right: auto; margin-left: -2px; background: #a0a2a8; }

/* arrange view */
.arrange { flex: 1; min-width: 0; display: grid; grid-template-columns: 1fr 14px; padding: 4px 0 0 4px; }
.canvas { position: relative; min-width: 0; }
.ruler { display: flex; height: 26px; background: #9ca9c5; color: #10182c; font: 600 12px/16px "Noto Sans", sans-serif; }
.ruler span { min-width: 0; }
.pre { flex: 4800 1 0; }
.bar { flex: 8157 1 0; height: 25px; border-left: 1px solid #10141f; padding: 9px 0 0 5px; }
.bar.last { flex-grow: 6988; }
.parts { display: flex; height: 20px; border-top: 1px solid #3c3f77; border-bottom: 1px solid #363a80; }
.part { background: linear-gradient(#9a99ee, #7876d4); border-top: 1px solid #b5b4f6; border-bottom: 1px solid #a5a4ee; }
.part + .part { border-left: 1px solid #3f3d9c; }
.p1 { flex: 537 1 0; } .p2 { flex: 653 1 0; } .p3 { flex: 233 1 0; }
.p3 { background: linear-gradient(#b478ee, #914bd8); border-top-color: #c898f8; border-bottom-color: #a56be6; }
.markerlane { position: relative; display: flex; align-items: flex-end; height: 41px; padding-bottom: 1px; background: #464d5b; border-bottom: 1px solid #70757f; }
.before { flex: 1190 1 0; }
.flag { flex: 233 1 0; position: relative; text-indent: 4px; font-size: 11px; font-weight: 600; line-height: 15px; color: #f4e0ea; background: linear-gradient(45deg, #000 45px, transparent 46px); }
.split { height: 9px; background: #383b42; }
.lanes { position: relative; background: #444a60; }
.lines { position: absolute; left: 0; top: 0; width: 100%; height: 100%; }
.soft { opacity: .16; }
.lane { height: 62px; padding-top: 1px; }
.event { position: relative; height: 58px; border-top: 2px solid #abcdf6; border-bottom: 1px solid #a2c0f0; background: linear-gradient(#99c1f3, #7ba5dc 50%, #7398db); }
.event svg { width: 100%; height: 55px; }
.clip { position: absolute; left: 4px; top: 0; color: #33507c; font-weight: 600; }
.lane.cut { height: 6px; overflow: hidden; }
.lane.cut .event { height: 5px; background: #93bdf4; }
.playhead { position: absolute; top: 0; bottom: 0; width: 4px; background: #fff; border: solid #232a3c; border-width: 0 1px; }
.side { position: relative; }
.corner { position: relative; width: 15px; height: 25px; margin-left: -5px; background: #0b0c0f; }
.corner svg { padding: 4px 1px; width: 11px; height: 13px; background: #686a70; color: #111; }
.hscroll { grid-column: 1 / -1; display: flex; align-items: center; height: 15px; padding: 0 20px 2px 5px; color: #c4c4c8; }
.dot { width: 6px; height: 6px; border-radius: 3px; background: #c4c4c8; }
.track-line { flex: 1; height: 1px; background: #c4c4c8; display: flex; align-items: center; }
.thumb { width: 58px; height: 5px; border-radius: 3px; background: #c4c4c8; flex: none; }
.hscroll svg { margin: 0 10px 0 10px; }
.sign { width: 5px; height: 5px; background: linear-gradient(#c4c4c8, #c4c4c8) center / 5px 1px no-repeat; }
.plus { background: linear-gradient(#c4c4c8, #c4c4c8) center / 5px 1px no-repeat, linear-gradient(#c4c4c8, #c4c4c8) center / 1px 5px no-repeat; }
input[type=range] { width: 46px; height: 7px; margin: 0 7px 0 6px; background: linear-gradient(#c4c4c8, #c4c4c8) center / 100% 1px no-repeat; }
input[type=range]::-webkit-slider-thumb { appearance: none; width: 6px; height: 6px; border-radius: 3px; background: #c4c4c8; }

/* chord pads */
.chords { flex: 1; display: flex; padding: 10px 8px 8px; }
.rail { display: flex; flex-direction: column; align-items: center; width: 28px; padding: 3px 8px 1px 2px; border-right: 1px solid #8c8e95; color: #a8aab0; }
.rail button { margin-bottom: 11px; }
.rail .push { margin-top: 63px; }
.rail .lit { width: 18px; height: 18px; margin: auto 0 0; border-radius: 2px; background: #dfe0e4; }
.deck { flex: 1; min-width: 0; margin-left: 8px; display: flex; flex-direction: column; gap: 14px; }
.piano { display: flex; height: 40px; color: #141418; }
.player { position: relative; width: 119px; border-radius: 3px; background: linear-gradient(#a2a3a8, #9193a0); }
.player select { width: 100%; height: 40px; padding: 0 20px 18px 6px; font-weight: 600; font-size: 11px; }
.player .arrow { right: 4px; }
.keyboard { flex: 1; display: flex; border-left: 1px solid #1a1c26; }
.key { position: relative; flex: 36 1 0; display: flex; align-items: flex-end; text-indent: 10px; border-right: 1px solid #1a1c26; border-radius: 0 0 3px 3px; background: linear-gradient(#a2a2a6, #9496a4); font-size: 11px; }
.key.wide { flex-grow: 37; }
.key.used { background: linear-gradient(#8494c4, #8292c0); }
.black { position: absolute; z-index: 1; top: 0; width: 22px; height: 24px; background: #000; border: 1px solid #000; border-top: 0; border-radius: 0 0 4px 4px; }
.used .black { background: #7587ae; }
.black.s17 { left: -18px; } .black.s7 { left: -8px; } .black.s11 { left: -12px; } .black.s5 { left: -6px; }
.pads { display: grid; grid-template-columns: repeat(16, minmax(0, 1fr)); grid-template-rows: 96px 96px; gap: 8px; }
.pad { position: relative; grid-column: span 2; flex-direction: column; justify-content: flex-start; border: 4px solid #aeb2c2; border-radius: 6px; background: linear-gradient(#9c9ea6, #8b8d9e); box-shadow: inset 0 0 0 1px #14151c; color: #0d0d10; overflow: hidden; }
.r1 { grid-row: 1; } .r2 { grid-row: 2; }
.c2 { grid-column: 2 / span 2; } .c4 { grid-column: 4 / span 2; } .c8 { grid-column: 8 / span 2; } .c10 { grid-column: 10 / span 2; } .c12 { grid-column: 12 / span 2; }
.tl { border-top-left-radius: 18px; } .tr { border-top-right-radius: 18px; } .bl { border-bottom-left-radius: 18px; } .br { border-bottom-right-radius: 18px; }
.pad b { align-self: flex-end; padding-right: 3px; font-size: 11px; font-weight: 600; line-height: 16px; }
.chord { flex: 1; font-size: 33px; line-height: 36px; }
.chord sup { font-size: 26px; line-height: 0; vertical-align: 6px; }
.chord small { font-size: 26px; }
.voicing { align-self: stretch; width: 100%; height: 22px; border-top: 1px solid #3c3e4a; }
```
FILE: project.js
```js
const NS = 'http://www.w3.org/2000/svg';
const WIDTH = 1423;   // timeline units shown
const FIRST = 48.3;   // start of bar 12
const BAR = 81.57;
const barX = bar => FIRST + (bar - 12) * BAR;

let seed = 7;
const rnd = () => (seed = (seed * 16807) % 2147483647) / 2147483647;

function add(svg, tag, attrs) {
  const el = document.createElementNS(NS, tag);
  for (const k in attrs) el.setAttribute(k, attrs[k]);
  svg.appendChild(el);
}

// kick positions inside a four-bar phrase, starting at bar 12
const PHRASE = [[0, .625], [0, .5, .625, .82], [0, .625], [0, .625, .875]];
const kicks = [], snares = [];
for (let bar = 11; bar < 29; bar++) {
  PHRASE[(bar - 8) % 4].forEach(p => kicks.push(bar + p));
  snares.push(bar + .25, bar + .75);
}

function hit(x, w, a, cy) {
  const top = [], low = [];
  for (let i = 0; i <= w; i++) {
    const h = i === 0 ? a * .6 : Math.max(.6, a * (1 - i / w) * (.7 + .5 * rnd()));
    top.push((x + i).toFixed(1) + ',' + (cy - h).toFixed(1));
    low.unshift((x + i).toFixed(1) + ',' + (cy + h * (.8 + .2 * rnd())).toFixed(1));
  }
  return 'M' + top.concat(low).join('L') + 'Z';
}

function channels(svg, hits, from, thinLow) {
  [[14, '#2f4058', '#688ab8'], [42, '#050a18', '#4b69a4']].forEach(([cy, line, fill], n) => {
    add(svg, 'path', { d: `M${from} ${cy}H${WIDTH}`, stroke: line, 'stroke-width': 2 });
    const d = hits.map(([x, w, a]) => hit(x, w, n && thinLow ? a * .5 : a, cy)).join('');
    add(svg, 'path', { d, fill, stroke: line, 'stroke-width': 1 });
  });
}

const draw = {
  folder(svg) {
    [[4, 0], [9, 0], [13, 0], [18, 0], [22, 0], [27, 168], [32, 0], [42, 1128], [47, 0]].forEach(([y, x], i) =>
      add(svg, 'path', { d: `M${x} ${y + .5}H${WIDTH}`, stroke: '#3f62a0', 'stroke-width': 3, opacity: .26 + i * .03 }));
  },
  notes(svg) {
    const dia = (x, y) => add(svg, 'path', { d: `M${x} ${y - 6}l5.500 6-5.500 6-5.500-6z`, fill: '#43669f' });
    kicks.forEach(b => dia(barX(b), 48));
    snares.forEach(b => dia(barX(b), 41));
  },
  kick(svg) { channels(svg, kicks.map(b => [barX(b) + 1, b % 4 === 2 ? 9 : 12, b % 4 === 2 ? 9 : 6.5 + rnd() * 2]), 0); },
  snare1(svg) { channels(svg, snares.map(b => [barX(b), 6, 3.8 + rnd()]), 0); },
  snare2(svg) { channels(svg, snares.map(b => [barX(b), 10, 8 + rnd()]), 0); },
  mix(svg) { channels(svg, kicks.map(b => [barX(b) + 1, 6, 5]).concat(snares.map(b => [barX(b) - 1, 3, 6])), 0); },
  hat(svg) {
    const hits = [];
    for (let b = 14; b < 29; b += .25) {
      if (b % 4 === 3.75) hits.push([barX(b) - 9, 6, 5], [barX(b), 26, 5.5], [barX(b) + 7, 18, 5.5]);
      else hits.push([barX(b), b % .5 ? 9 : 5, b % .5 ? 6.5 : 4]);
    }
    channels(svg, hits, 195, true);
    add(svg, 'path', { d: 'M169 14.500h26', stroke: '#7397cc' });
    add(svg, 'path', { d: 'M169 42.500h26', stroke: '#050a18' });
  },
  ehat(svg) {
    const hits = [];
    for (let x = 14; x < WIDTH; x += 5.1) if (rnd() > .25) hits.push([x, 2, 1.6 + rnd() * 2]);
    channels(svg, hits, 0);
  }
};

document.querySelectorAll('[data-wave]').forEach(svg => {
  const from = +(svg.dataset.from || 0);
  svg.setAttribute('viewBox', `${from} 0 ${WIDTH - from} 55`);
  svg.setAttribute('preserveAspectRatio', 'none');
  draw[svg.dataset.wave](svg);
});

document.querySelectorAll('[data-grid]').forEach(svg => {
  svg.setAttribute('viewBox', `0 0 ${WIDTH} 10`);
  svg.setAttribute('preserveAspectRatio', 'none');
  for (let b = 12; b < 29; b++)
    add(svg, 'path', { d: `M${Math.floor(barX(b)) + .5} 0V10`, stroke: svg.dataset.grid });
});

document.querySelectorAll('.voicing').forEach(svg => {
  const tick = y => x => add(svg, 'rect', { x: +x + 1, y, width: 4, height: 10, fill: '#fff' });
  (svg.dataset.high || '').split(',').filter(Boolean).forEach(tick(1));
  (svg.dataset.low || '').split(',').filter(Boolean).forEach(tick(11));
});

// 43 white keys from C0 to C6; the black key left of each note, by its overlap
const SHARPS = [null, 's17', 's7', null, 's17', 's11', 's5'];
const board = document.getElementById('keyboard');
for (let i = 0; i < 43; i++) {
  const key = document.createElement('span');
  key.className = 'key' + (i < 11 ? ' wide' : '') + (i > 6 && i < 14 ? ' used' : '');
  if (i % 7 === 0) key.textContent = 'C' + i / 7;
  if (SHARPS[i % 7]) {
    const black = document.createElement('i');
    black.className = 'black ' + SHARPS[i % 7];
    key.appendChild(black);
  }
  board.appendChild(key);
}
```
